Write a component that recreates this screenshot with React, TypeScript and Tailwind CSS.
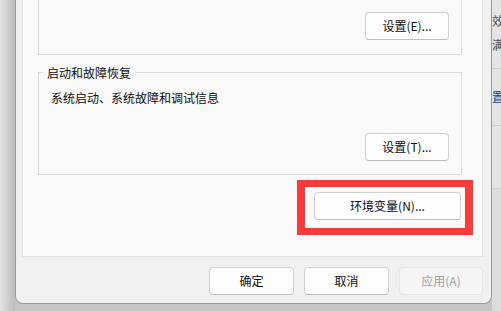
export default function App() {
  const btn =
    'h-[28px] shrink-0 rounded-[4px] border border-[#d0d0d0] border-b-[#bdbdbd] bg-[#fdfdfd] text-[12px] leading-none text-[#0d0d0d] flex items-center justify-center'

  return (
    <div
      className="flex h-[311px] w-[501px] overflow-hidden bg-[#c6c6c6]"
      style={{ fontFamily: '"Noto Sans CJK SC", "Microsoft YaHei UI", sans-serif' }}
    >
      {/* desktop / shadow on the left */}
      <div className="w-[15px] shrink-0 bg-gradient-to-r from-[#e3e3e3] to-[#bcbcbc]" />

      {/* dialog */}
      <div className="flex w-[477px] shrink-0 flex-col">
        <div className="mt-[-38px] flex flex-col rounded-b-[8px] border-x border-b border-[#9a9a9a] bg-[#f0f0f0] pl-[6px] pr-[8px] pb-[8px]">
          {/* tab page */}
          <div className="flex flex-col gap-[17px] border border-[#e2e2e2] bg-[#f9f9f9] pt-[12px] pl-[15px] pr-[20px] pb-[36px]">
            <div className="flex h-[80px] items-end justify-end border border-[#dcdcdc] pr-[12px] pb-[14px]">
              <button className={`${btn} w-[84px]`}>设置(E)...</button>
            </div>

            <div className="relative flex flex-col border border-[#dcdcdc] pt-[17px] pl-[12px] pr-[12px] pb-[13px]">
              <span className="absolute left-[4px] top-[-8px] bg-[#f9f9f9] px-[4px] text-[12px] leading-[16px] text-[#0d0d0d]">
                启动和故障恢复
              </span>
              <p className="text-[12px] leading-[16px] text-[#0d0d0d]">系统启动、系统故障和调试信息</p>
              <div className="mt-[27px] flex justify-end">
                <button className={`${btn} w-[84px]`}>设置(T)...</button>
              </div>
            </div>

            <div className="flex justify-end pr-[1px]">
              <div className="relative">
                <button className={`${btn} w-[147px]`}>环境变量(N)...</button>
                <div className="pointer-events-none absolute -left-[17px] -top-[12px] -right-[12px] -bottom-[15px] border-x-[8px] border-y-[7px] border-[#f93b3b]" />
              </div>
            </div>
          </div>

          {/* dialog buttons */}
          <div className="mt-[10px] flex justify-end gap-[10px]">
            <button className={`${btn} w-[85px]`}>确定</button>
            <button className={`${btn} w-[85px]`}>取消</button>
            <button className="flex h-[28px] w-[84px] items-center justify-center rounded-[4px] border border-[#e6e6e6] bg-[#f5f5f5] text-[12px] leading-none text-[#a0a0a0]">
              应用(A)
            </button>
          </div>
        </div>
      </div>

      {/* window behind, on the right */}
      <div className="flex w-[9px] shrink-0 flex-col overflow-hidden bg-[#e4e4e4] text-[12px] leading-[16px]">
        <div className="flex h-[69px] shrink-0 flex-col border-b border-[#cfcfcf] pt-[13px]">
          <span className="whitespace-nowrap text-[#4a4a4a]">效果</span>
          <span className="mt-[8px] whitespace-nowrap text-[#4a4a4a]">满足</span>
        </div>
        <div className="flex h-[57px] shrink-0 flex-col border-b border-[#cfcfcf] pt-[20px]">
          <span className="whitespace-nowrap text-[#0b3f95]">置</span>
        </div>
        <div className="h-[63px] shrink-0 border-b border-[#d3d3d3]" />
        <div className="flex-1 bg-[#dcdcdc]" />
      </div>
    </div>
  )
}
